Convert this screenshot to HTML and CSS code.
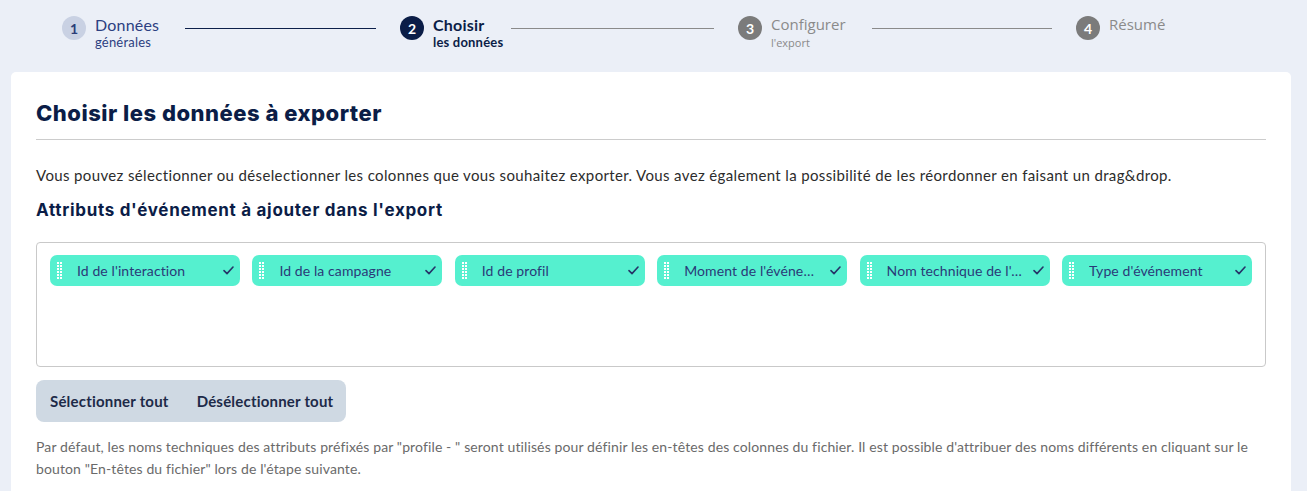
FILE: index.html
```html
<!DOCTYPE html>
<html lang="fr">
<head>
<meta charset="utf-8">
<title>Choisir les données</title>
<link rel="stylesheet" href="styles.css">
</head>
<body>
<div class="page">
  <nav class="stepper">
    <div class="step done">
      <span class="circle">1</span>
      <div class="label"><div class="main">Données</div><div class="sub">générales</div></div>
      <span class="line dark"></span>
    </div>
    <div class="step active">
      <span class="circle">2</span>
      <div class="label"><div class="main">Choisir</div><div class="sub">les données</div></div>
      <span class="line"></span>
    </div>
    <div class="step todo">
      <span class="circle">3</span>
      <div class="label"><div class="main">Configurer</div><div class="sub">l'export</div></div>
      <span class="line"></span>
    </div>
    <div class="step todo last">
      <span class="circle">4</span>
      <div class="label"><div class="main">Résumé</div></div>
    </div>
  </nav>

  <main class="card">
    <h1 class="title">Choisir les données à exporter</h1>
    <p class="intro">Vous pouvez sélectionner ou déselectionner les colonnes que vous souhaitez exporter. Vous avez également la possibilité de les réordonner en faisant un drag&amp;drop.</p>
    <h2 class="subtitle">Attributs d'événement à ajouter dans l'export</h2>

    <div class="chipbox">
      <div class="chip"><svg class="handle" width="5" height="18" viewBox="0 0 5 18"><g fill="#fff"><rect x="0" y="0" width="2" height="2"/><rect x="0" y="3" width="2" height="2"/><rect x="0" y="6" width="2" height="2"/><rect x="0" y="9" width="2" height="2"/><rect x="0" y="12" width="2" height="2"/><rect x="0" y="15" width="2" height="2"/><rect x="3" y="0" width="2" height="2"/><rect x="3" y="3" width="2" height="2"/><rect x="3" y="6" width="2" height="2"/><rect x="3" y="9" width="2" height="2"/><rect x="3" y="12" width="2" height="2"/><rect x="3" y="15" width="2" height="2"/></g></svg><span class="chip-text">Id de l'interaction</span><svg class="check" width="11" height="9" viewBox="0 0 11 9"><path d="M1 4.6 L4 7.6 L10 1" fill="none" stroke="#263468" stroke-width="1.6" stroke-linecap="round" stroke-linejoin="round"/></svg></div>
      <div class="chip"><svg class="handle" width="5" height="18" viewBox="0 0 5 18"><g fill="#fff"><rect x="0" y="0" width="2" height="2"/><rect x="0" y="3" width="2" height="2"/><rect x="0" y="6" width="2" height="2"/><rect x="0" y="9" width="2" height="2"/><rect x="0" y="12" width="2" height="2"/><rect x="0" y="15" width="2" height="2"/><rect x="3" y="0" width="2" height="2"/><rect x="3" y="3" width="2" height="2"/><rect x="3" y="6" width="2" height="2"/><rect x="3" y="9" width="2" height="2"/><rect x="3" y="12" width="2" height="2"/><rect x="3" y="15" width="2" height="2"/></g></svg><span class="chip-text">Id de la campagne</span><svg class="check" width="11" height="9" viewBox="0 0 11 9"><path d="M1 4.6 L4 7.6 L10 1" fill="none" stroke="#263468" stroke-width="1.6" stroke-linecap="round" stroke-linejoin="round"/></svg></div>
      <div class="chip"><svg class="handle" width="5" height="18" viewBox="0 0 5 18"><g fill="#fff"><rect x="0" y="0" width="2" height="2"/><rect x="0" y="3" width="2" height="2"/><rect x="0" y="6" width="2" height="2"/><rect x="0" y="9" width="2" height="2"/><rect x="0" y="12" width="2" height="2"/><rect x="0" y="15" width="2" height="2"/><rect x="3" y="0" width="2" height="2"/><rect x="3" y="3" width="2" height="2"/><rect x="3" y="6" width="2" height="2"/><rect x="3" y="9" width="2" height="2"/><rect x="3" y="12" width="2" height="2"/><rect x="3" y="15" width="2" height="2"/></g></svg><span class="chip-text">Id de profil</span><svg class="check" width="11" height="9" viewBox="0 0 11 9"><path d="M1 4.6 L4 7.6 L10 1" fill="none" stroke="#263468" stroke-width="1.6" stroke-linecap="round" stroke-linejoin="round"/></svg></div>
      <div class="chip"><svg class="handle" width="5" height="18" viewBox="0 0 5 18"><g fill="#fff"><rect x="0" y="0" width="2" height="2"/><rect x="0" y="3" width="2" height="2"/><rect x="0" y="6" width="2" height="2"/><rect x="0" y="9" width="2" height="2"/><rect x="0" y="12" width="2" height="2"/><rect x="0" y="15" width="2" height="2"/><rect x="3" y="0" width="2" height="2"/><rect x="3" y="3" width="2" height="2"/><rect x="3" y="6" width="2" height="2"/><rect x="3" y="9" width="2" height="2"/><rect x="3" y="12" width="2" height="2"/><rect x="3" y="15" width="2" height="2"/></g></svg><span class="chip-text">Moment de l'événement</span><svg class="check" width="11" height="9" viewBox="0 0 11 9"><path d="M1 4.6 L4 7.6 L10 1" fill="none" stroke="#263468" stroke-width="1.6" stroke-linecap="round" stroke-linejoin="round"/></svg></div>
      <div class="chip"><svg class="handle" width="5" height="18" viewBox="0 0 5 18"><g fill="#fff"><rect x="0" y="0" width="2" height="2"/><rect x="0" y="3" width="2" height="2"/><rect x="0" y="6" width="2" height="2"/><rect x="0" y="9" width="2" height="2"/><rect x="0" y="12" width="2" height="2"/><rect x="0" y="15" width="2" height="2"/><rect x="3" y="0" width="2" height="2"/><rect x="3" y="3" width="2" height="2"/><rect x="3" y="6" width="2" height="2"/><rect x="3" y="9" width="2" height="2"/><rect x="3" y="12" width="2" height="2"/><rect x="3" y="15" width="2" height="2"/></g></svg><span class="chip-text">Nom technique de l'événement</span><svg class="check" width="11" height="9" viewBox="0 0 11 9"><path d="M1 4.6 L4 7.6 L10 1" fill="none" stroke="#263468" stroke-width="1.6" stroke-linecap="round" stroke-linejoin="round"/></svg></div>
      <div class="chip"><svg class="handle" width="5" height="18" viewBox="0 0 5 18"><g fill="#fff"><rect x="0" y="0" width="2" height="2"/><rect x="0" y="3" width="2" height="2"/><rect x="0" y="6" width="2" height="2"/><rect x="0" y="9" width="2" height="2"/><rect x="0" y="12" width="2" height="2"/><rect x="0" y="15" width="2" height="2"/><rect x="3" y="0" width="2" height="2"/><rect x="3" y="3" width="2" height="2"/><rect x="3" y="6" width="2" height="2"/><rect x="3" y="9" width="2" height="2"/><rect x="3" y="12" width="2" height="2"/><rect x="3" y="15" width="2" height="2"/></g></svg><span class="chip-text">Type d'événement</span><svg class="check" width="11" height="9" viewBox="0 0 11 9"><path d="M1 4.6 L4 7.6 L10 1" fill="none" stroke="#263468" stroke-width="1.6" stroke-linecap="round" stroke-linejoin="round"/></svg></div>
    </div>

    <div class="btn-group">
      <button class="btn">Sélectionner tout</button>
      <button class="btn">Désélectionner tout</button>
    </div>

    <p class="note">Par défaut, les noms techniques des attributs préfixés par "profile - " seront utilisés pour définir les en-têtes des colonnes du fichier. Il est possible d'attribuer des noms différents en cliquant sur le bouton "En-têtes du fichier" lors de l'étape suivante.</p>
  </main>
</div>
</body>
</html>
```

FILE: styles.css
```css
* { box-sizing: border-box; }
html, body { margin: 0; padding: 0; }
body {
  background: #ebeff7;
  font-family: "Lato", "Noto Sans", sans-serif;
  color: #2b2b2b;
  overflow: hidden;
}
.page { padding: 0 16px 0 11px; }

/* Stepper */
.stepper {
  display: flex;
  padding: 16px 0 0 51px;
  height: 72px;
}
.step {
  display: flex;
  align-items: flex-start;
  width: 338px;
  flex: none;
}
.step.last { width: auto; }
.circle {
  width: 24px;
  height: 24px;
  border-radius: 50%;
  display: flex;
  align-items: center;
  justify-content: center;
  font-family: "Lato", sans-serif;
  font-weight: 700;
  font-size: 14px;
  flex: none;
}
.label {
  margin-left: 9px;
  line-height: 1;
}
.label .main { font-size: 16px; margin-top: 1px; letter-spacing: 0.2px; }
.label .sub { font-size: 13px; margin-top: 3px; letter-spacing: 0.2px; }
.line {
  flex: 1;
  height: 1px;
  margin: 12px 24px 0 26px;
  background: #8a8a8a;
}
.line.dark { background: #0c1f4a; }
.step.done .circle { background: #c9d1e3; color: #2b3d78; }
.step.done .label { color: #2c4081; }
.step.active .circle { background: #0b1d47; color: #fff; }
.step.active .label { color: #0b1d47; font-weight: 700; }
.step.active .line { margin-left: 8px; }
.step.todo .circle { background: #7b7b7b; color: #fff; }
.step.todo .label { color: #8a8a8a; font-family: "Open Sans", sans-serif; letter-spacing: 0; }
.step.todo .label .main { font-size: 15px; margin-top: 1px; letter-spacing: 0; }
.step.todo .label .sub { font-size: 11px; margin-top: 5px; letter-spacing: 0; }

/* Card */
.card {
  background: #fff;
  border-radius: 5px;
  padding: 28px 25px 20px 25px;
  min-height: 430px;
}
.title {
  font-family: "Inter", sans-serif;
  font-weight: 800;
  font-size: 22px;
  letter-spacing: 0.5px;
  color: #0b1d47;
  margin: 0;
  padding-bottom: 13px;
  border-bottom: 1px solid #cccccc;
}
.intro {
  font-size: 15px;
  letter-spacing: 0.36px;
  margin: 25px 0 0;
  line-height: 20px;
  color: #2c2c2c;
}
.subtitle {
  font-family: "Inter", sans-serif;
  font-weight: 700;
  font-size: 17px;
  letter-spacing: 0.7px;
  color: #0b1d47;
  margin: 14px 0 0;
  line-height: 22px;
}
.chipbox {
  margin-top: 21px;
  border: 1px solid #c9c9c9;
  border-radius: 4px;
  height: 125px;
  padding: 12px 13px;
  display: flex;
  align-items: flex-start;
  gap: 12.4px;
}
.chip {
  width: 190px;
  height: 31px;
  flex: none;
  background: #55f0cf;
  border-radius: 7px;
  display: flex;
  align-items: center;
  padding: 0 6px 0 7px;
  color: #2a3a78;
  font-size: 14px;
  letter-spacing: 0.1px;
}
.handle { flex: none; }
.chip-text {
  flex: 1;
  min-width: 0;
  margin-left: 15px;
  white-space: nowrap;
  overflow: hidden;
  text-overflow: ellipsis;
}
.check { flex: none; margin-left: 10px; }

.btn-group {
  margin-top: 13px;
  display: inline-flex;
  background: #cfd9e3;
  border-radius: 8px;
  height: 42px;
  align-items: center;
  padding: 0 13px 0 14px;
  gap: 28px;
}
.btn {
  border: 0;
  background: transparent;
  padding: 0;
  font-family: "Lato", sans-serif;
  font-weight: 700;
  font-size: 15px;
  letter-spacing: 0.2px;
  color: #1d2a48;
}
.note {
  margin: 14px 0 0;
  font-size: 14px;
  letter-spacing: 0.12px;
  line-height: 22px;
  color: #6a6a6a;
}
```
